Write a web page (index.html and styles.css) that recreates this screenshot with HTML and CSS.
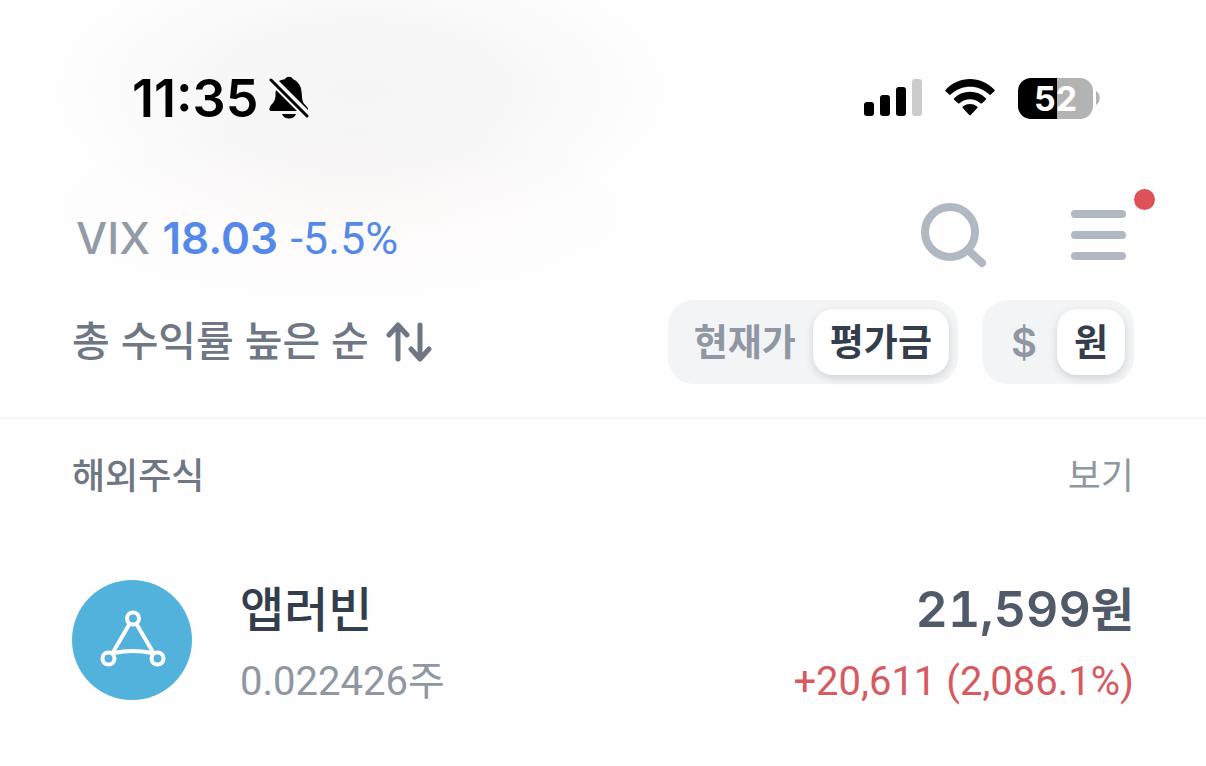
FILE: index.html
```html
<!DOCTYPE html>
<html lang="ko">
<head>
    <meta charset="UTF-8">
    <meta name="viewport" content="width=device-width, initial-scale=1.0">
    <title>해외주식</title>
    <link rel="stylesheet" href="styles.css">
</head>
<body>
    <header class="header">
        <div class="status-bar">
            <div class="status-left">
                <span class="time">11:35</span>
                <svg class="bell" width="42" height="44" viewBox="0 0 42 44" aria-hidden="true">
                    <path d="M10 5C13 3 15 4 16 3C18 0 22 0 24 3C25 4 27 4 29 7C34 12 32 20 34 26C35 29 40 31 39 34Z"/>
                    <path d="M7 14L28 35H3C0 35 0 33 1 31C2 28 5 27 6 23C7 20 6 18 7 14Z"/>
                    <path d="M13 38H27C25 44 15 44 13 38Z"/>
                    <path class="bell-slash" d="M2 4L38 40"/>
                </svg>
            </div>
            <div class="status-right">
                <svg width="58" height="38" viewBox="0 0 58 38" aria-hidden="true">
                    <rect x="0" y="23" width="10" height="14" rx="3"/>
                    <rect x="16" y="16" width="10" height="21" rx="3"/>
                    <rect x="32" y="8" width="10" height="29" rx="3"/>
                    <rect x="48" y="0" width="10" height="37" rx="3" fill="#cbcbcb"/>
                </svg>
                <svg width="50" height="38" viewBox="0 0 50 38" aria-hidden="true">
                    <path d="M0.6 10.8C14 -3.6 36 -3.6 49.4 10.8Q50 11.5 49.4 12.2L45.8 15.6Q45 16.2 44.3 15.5C33.5 5 16.5 5 5.7 15.5Q5 16.2 4.2 15.6L0.6 12.2Q0 11.5 0.6 10.8Z"/>
                    <path d="M9.2 19.2C18 10.7 32 10.7 40.8 19.2Q41.5 20 40.8 20.7L37 24.2Q36.3 24.8 35.5 24.2C29.5 18.8 20.5 18.8 14.5 24.2Q13.7 24.8 13 24.2L9.2 20.7Q8.5 20 9.2 19.2Z"/>
                    <path d="M17.8 27.5C22 24.2 28 24.2 32.2 27.5Q33 28.3 32.2 29.1L25.8 36Q25 36.8 24.2 36L17.8 29.1Q17 28.3 17.8 27.5Z"/>
                </svg>
                <div class="battery">
                    <span class="battery-level">52</span>
                    <svg width="4" height="14" viewBox="0 0 4 14" aria-hidden="true">
                        <path d="M0 0C5 3 5 11 0 14Z" fill="#b3b3b3"/>
                    </svg>
                </div>
            </div>
        </div>

        <div class="toolbar">
            <p class="index">
                <span class="index-name">VIX</span>
                <strong class="index-value">18.03</strong>
                <span class="index-change">-5.5%</span>
            </p>
            <div class="actions">
                <button class="icon-button" type="button" aria-label="검색">
                    <svg width="66" height="66" viewBox="0 0 66 66" aria-hidden="true">
                        <circle cx="30" cy="30" r="25"/>
                        <path d="M48 48L62 61"/>
                    </svg>
                </button>
                <button class="icon-button" type="button" aria-label="메뉴">
                    <svg width="56" height="66" viewBox="0 0 56 66" aria-hidden="true">
                        <path d="M5 12H52M5 33H52M5 54H52"/>
                    </svg>
                    <span class="badge"></span>
                </button>
            </div>
        </div>

        <div class="filters">
            <button class="sort" type="button">
                <span>총 수익률 높은 순</span>
                <svg width="46" height="40" viewBox="0 0 46 40" aria-hidden="true">
                    <path d="M12 37V4M3 13L12 3L21 13M34 3V36M25 27L34 37L43 27"/>
                </svg>
            </button>
            <div class="switches">
                <div class="switch">
                    <button type="button" aria-pressed="false">현재가</button>
                    <button class="active" type="button" aria-pressed="true">평가금</button>
                </div>
                <div class="switch">
                    <button class="dollar" type="button" aria-pressed="false">$</button>
                    <button class="active" type="button" aria-pressed="true">원</button>
                </div>
            </div>
        </div>
    </header>

    <main class="content">
        <div class="section-head">
            <h2>해외주식</h2>
            <button class="view" type="button">보기</button>
        </div>
        <div class="stock">
            <svg class="logo" width="120" height="120" viewBox="0 0 120 120" aria-hidden="true">
                <circle class="logo-bg" cx="60" cy="60" r="60"/>
                <circle cx="61" cy="38.5" r="6"/>
                <circle cx="36.5" cy="78.5" r="6"/>
                <circle cx="85.5" cy="78.5" r="6"/>
                <path d="M57.5 44L40.5 73M64.5 44L81.5 73M42 73Q61 69 80 73"/>
            </svg>
            <div class="stock-info">
                <div class="name">앱러빈</div>
                <div class="shares">0.022426주</div>
            </div>
            <div class="stock-value">
                <div class="amount">21,599<span class="unit">원</span></div>
                <div class="profit">+20,611 (2,086.1%)</div>
            </div>
        </div>
    </main>
</body>
</html>
```
FILE: styles.css
```css
* {
    box-sizing: border-box;
}
body {
    margin: 0;
    background-color: #fefefe;
    color: #333d4b;
    font-family: Inter, "Noto Sans CJK KR", sans-serif;
}
button {
    margin: 0;
    padding: 0;
    border: none;
    background: none;
    color: inherit;
    font: inherit;
    cursor: pointer;
}
svg {
    display: block;
    flex: none;
}
h2, p {
    margin: 0;
}

/* header */
.header {
    padding-bottom: 33px;
    border-bottom: 3px solid #f9f9fa;
    background-image:
        radial-gradient(ellipse 320px 150px at 360px 90px, rgba(0, 0, 0, 0.035), rgba(0, 0, 0, 0.028) 45%, rgba(0, 0, 0, 0.008) 80%, transparent),
        radial-gradient(ellipse 320px 100px at 340px 210px, rgba(255, 200, 200, 0.07), transparent);
}
.status-bar {
    display: flex;
    justify-content: space-between;
    align-items: center;
    height: 136px;
    padding: 60px 106px 0 132px;
    color: #000;
}
.status-left, .status-right, .battery {
    display: flex;
    align-items: center;
}
.status-left {
    gap: 11px;
}
.status-right {
    gap: 23px;
}
.time {
    font-size: 52px;
    font-weight: 600;
}
.bell-slash {
    fill: none;
    stroke: #000;
    stroke-width: 3;
    stroke-linecap: round;
}
.battery {
    gap: 3px;
}
.battery-level {
    width: 75px;
    border-radius: 13px;
    background: linear-gradient(to right, #000 52%, #b3b3b3 52%);
    color: #fff;
    font-size: 34px;
    font-weight: 700;
    line-height: 41px;
    text-align: center;
}
.toolbar {
    display: flex;
    justify-content: space-between;
    align-items: center;
    margin-top: 65px;
    padding: 0 80px 0 76px;
}
.index {
    padding-top: 8px;
    font-size: 44px;
    line-height: 58px;
}
.index-name {
    color: #929ba5;
    font-weight: 500;
}
.index-value {
    color: #5489ea;
    font-weight: 600;
}
.index-change {
    color: #5489ea;
    font-family: Roboto, sans-serif;
    font-size: 45px;
}
.actions {
    display: flex;
    gap: 84px;
}
.icon-button {
    position: relative;
}
.icon-button svg {
    fill: none;
    stroke: #b0b8c1;
    stroke-width: 8;
    stroke-linecap: round;
}
.badge {
    position: absolute;
    top: -13px;
    right: -29px;
    width: 21px;
    height: 21px;
    border-radius: 50%;
    background-color: #dc5257;
}
.filters {
    display: flex;
    justify-content: space-between;
    align-items: center;
    margin-top: 32px;
    padding: 0 72px;
}
.sort {
    display: flex;
    align-items: center;
    gap: 17px;
    color: #6f7784;
    font-size: 41px;
    font-weight: 500;
}
.sort span {
    padding-bottom: 8px;
}
.sort svg {
    fill: none;
    stroke: #6f7784;
    stroke-width: 5;
    stroke-linecap: round;
    stroke-linejoin: round;
}
.switches {
    display: flex;
    gap: 24px;
}
.switch {
    display: flex;
    padding: 9px;
    border-radius: 26px;
    background-color: #f2f4f6;
}
.switch button {
    min-width: 66px;
    height: 66px;
    padding: 0 17px 4px;
    border-radius: 20px;
    color: #8f97a2;
    font-size: 37px;
    font-weight: 700;
}
.switch .dollar {
    padding-bottom: 0;
    font-size: 40px;
    font-weight: 600;
}
.switch .active {
    background-color: #fff;
    box-shadow: 0 3px 8px rgba(0, 0, 0, 0.14);
    color: #333d4b;
}

/* stock list */
.content {
    padding: 28px 72px 0;
}
.section-head {
    display: flex;
    justify-content: space-between;
    align-items: center;
    height: 50px;
    font-size: 36px;
}
.section-head h2 {
    color: #6f7784;
    font-size: 36px;
    font-weight: 500;
}
.view {
    color: #8f97a2;
}
.stock {
    display: flex;
    align-items: center;
    margin-top: 63px;
}
.logo {
    fill: none;
    stroke: #fff;
    stroke-width: 4;
}
.logo-bg {
    fill: #52b2dc;
    stroke: none;
}
.stock-info {
    margin-left: 48px;
    padding-top: 12px;
}
.stock-value {
    margin-left: auto;
    padding-top: 12px;
    text-align: right;
}
.name, .amount {
    font-size: 48px;
    font-weight: 500;
    line-height: 72px;
}
.amount {
    color: #515a68;
    font-size: 50px;
    font-weight: 600;
    font-variant-numeric: tabular-nums;
}
.unit {
    font-size: 47px;
}
.shares, .profit {
    color: #8f97a2;
    font-family: Roboto, "Noto Sans CJK KR", sans-serif;
    font-size: 40px;
    line-height: 72px;
}
.profit {
    color: #d65a60;
}
```
